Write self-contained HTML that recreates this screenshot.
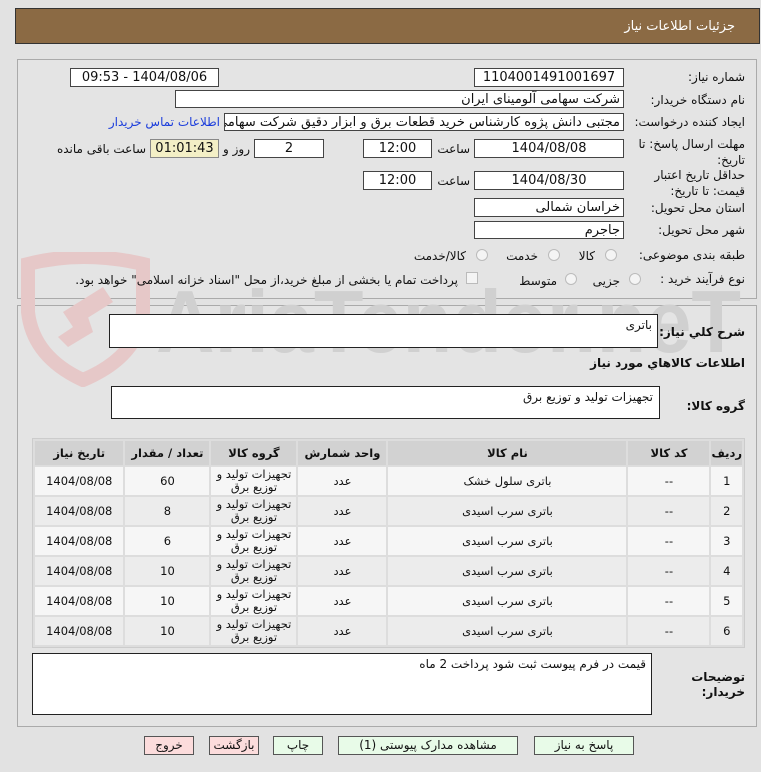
<!DOCTYPE html>
<html><head><meta charset="utf-8"><style>
*{box-sizing:border-box;margin:0;padding:0}
body{width:761px;height:772px;background:#e2e2e2;font-family:Tahoma,"DejaVu Sans","Noto Sans CJK SC",sans-serif;font-size:12px;color:#111;position:relative;overflow:hidden;direction:rtl}
.a{position:absolute}
.box{position:absolute;background:#fff;border:1px solid #444;text-align:center;line-height:17px;font-size:13px}
.lbl{position:absolute;white-space:nowrap;font-size:12px}
.ta{position:absolute;background:#fff;border:1px solid #222;padding:3px 5px;text-align:right;font-size:12px}
.rad{position:absolute;width:12px;height:12px;border-radius:50%;border:1px solid #bbb;background:#f4f4f4}
table{border-collapse:separate;border-spacing:2px;position:absolute;left:32px;top:438px;width:713px;background:#ddd;border:1px solid #ccc}
td,th{text-align:center;font-size:11.5px;height:28px;line-height:13px}
th{background:#d2d2d2;font-weight:bold;height:24px}
tr.o td{background:#f6f6f6}tr.e td{background:#ececec}
.btn{position:absolute;top:736px;height:19px;border:1px solid #555;font-size:12px;text-align:center;line-height:17px}
</style></head><body>
<div class="a" style="left:15px;top:8px;width:745px;height:36px;background:#8b6a44;border:1px solid #333"></div>
<div class="lbl" style="right:26px;top:19px;color:#fff;font-size:13px">جزئیات اطلاعات نیاز</div>

<div class="a" style="left:17px;top:59px;width:740px;height:240px;border:1px solid #aaa;background:#e4e4e4"></div>
<div class="a" style="left:17px;top:305px;width:740px;height:422px;border:1px solid #aaa;background:#e4e4e4"></div>

<!-- watermark -->
<svg class="a" style="left:18px;top:252px" width="740" height="135">
<path d="M10 12 Q65 -2 125 12 L125 60 Q120 105 65 128 Q15 105 10 60 Z" fill="none" stroke="#e6c8c8" stroke-width="14"/>
<path d="M45 60 L85 35 L95 50 L55 75 Z M40 85 L70 65 L75 80 L50 95Z" fill="#e6c8c8"/>
<text x="138" y="100" font-family="Liberation Sans,sans-serif" font-size="88" font-weight="bold" fill="#d0d0d0" textLength="585" lengthAdjust="spacingAndGlyphs" direction="ltr">AriaTender.neT</text>
</svg>

<div class="lbl" style="right:16px;top:70px">شماره نیاز:</div>
<div class="box" style="left:474px;top:68px;width:150px;height:19px">1104001491001697</div>
<div class="lbl" style="right:542px;top:70px">تاریخ و ساعت اعلان عمومی:</div>
<div class="box" style="left:70px;top:68px;width:149px;height:19px">1404/08/06 - 09:53</div>

<div class="lbl" style="right:16px;top:93px">نام دستگاه خریدار:</div>
<div class="box" style="left:175px;top:90px;width:449px;height:18px;text-align:right;padding-right:3px">شرکت سهامی آلومینای ایران</div>

<div class="lbl" style="right:16px;top:115px">ایجاد کننده درخواست:</div>
<div class="box" style="left:224px;top:113px;width:400px;height:18px;text-align:right;padding-right:3px;overflow:hidden;white-space:nowrap">مجتبی دانش پژوه کارشناس خرید قطعات برق و ابزار دقیق شرکت سهامی آلومینای ایران</div>
<div class="lbl" style="right:541px;top:115px;color:#1a3cdc">اطلاعات تماس خریدار</div>

<div class="lbl" style="right:16px;top:136px;line-height:16px;text-align:right">مهلت ارسال پاسخ: تا<br>تاریخ:</div>
<div class="box" style="left:474px;top:139px;width:150px;height:19px">1404/08/08</div>
<div class="lbl" style="right:291px;top:142px">ساعت</div>
<div class="box" style="left:363px;top:139px;width:69px;height:19px">12:00</div>
<div class="box" style="left:254px;top:139px;width:70px;height:19px">2</div>
<div class="lbl" style="right:511px;top:142px">روز و</div>
<div class="box" style="left:150px;top:139px;width:69px;height:19px;background:#f3efc6;border-color:#888">01:01:43</div>
<div class="lbl" style="right:615px;top:142px">ساعت باقی مانده</div>

<div class="lbl" style="right:16px;top:167px;line-height:16px;text-align:right">حداقل تاریخ اعتبار<br>قیمت: تا تاریخ:</div>
<div class="box" style="left:474px;top:171px;width:150px;height:19px">1404/08/30</div>
<div class="lbl" style="right:291px;top:174px">ساعت</div>
<div class="box" style="left:363px;top:171px;width:69px;height:19px">12:00</div>

<div class="lbl" style="right:16px;top:201px">استان محل تحویل:</div>
<div class="box" style="left:474px;top:198px;width:150px;height:19px;text-align:right;padding-right:3px">خراسان شمالی</div>
<div class="lbl" style="right:16px;top:223px">شهر محل تحویل:</div>
<div class="box" style="left:474px;top:221px;width:150px;height:18px;text-align:right;padding-right:3px">جاجرم</div>

<div class="lbl" style="right:16px;top:248px">طبقه بندی موضوعی:</div>
<div class="rad" style="left:605px;top:249px"></div><div class="lbl" style="right:166px;top:249px">کالا</div>
<div class="rad" style="left:548px;top:249px"></div><div class="lbl" style="right:223px;top:249px">خدمت</div>
<div class="rad" style="left:476px;top:249px"></div><div class="lbl" style="right:295px;top:249px">کالا/خدمت</div>

<div class="lbl" style="right:16px;top:272px">نوع فرآیند خرید :</div>
<div class="rad" style="left:629px;top:273px"></div><div class="lbl" style="right:141px;top:274px">جزیی</div>
<div class="rad" style="left:565px;top:273px"></div><div class="lbl" style="right:204px;top:274px">متوسط</div>
<div class="a" style="left:466px;top:272px;width:12px;height:12px;border:1px solid #bbb;background:#f4f4f4"></div>
<div class="lbl" style="right:303px;top:273px">پرداخت تمام یا بخشی از مبلغ خرید،از محل "اسناد خزانه اسلامی" خواهد بود.</div>

<div class="lbl" style="right:16px;top:325px;font-weight:bold">شرح کلي نياز:</div>
<div class="ta" style="left:109px;top:314px;width:549px;height:34px">باتری</div>
<div class="lbl" style="right:16px;top:356px;font-weight:bold">اطلاعات کالاهاي مورد نياز</div>
<div class="lbl" style="right:16px;top:399px;font-weight:bold">گروه کالا:</div>
<div class="ta" style="left:111px;top:386px;width:549px;height:33px;padding-right:6px">تجهیزات تولید و توزیع برق</div>

<table>
<tr><th style="width:27px">ردیف</th><th style="width:81px">کد کالا</th><th style="width:238px">نام کالا</th><th style="width:88px">واحد شمارش</th><th style="width:85px">گروه کالا</th><th style="width:84px">تعداد / مقدار</th><th>تاریخ نیاز</th></tr>
<tr class="o"><td>1</td><td>--</td><td>باتری سلول خشک</td><td>عدد</td><td>تجهیزات تولید و<br>توزیع برق</td><td>60</td><td>1404/08/08</td></tr>
<tr class="e"><td>2</td><td>--</td><td>باتری سرب اسیدی</td><td>عدد</td><td>تجهیزات تولید و<br>توزیع برق</td><td>8</td><td>1404/08/08</td></tr>
<tr class="o"><td>3</td><td>--</td><td>باتری سرب اسیدی</td><td>عدد</td><td>تجهیزات تولید و<br>توزیع برق</td><td>6</td><td>1404/08/08</td></tr>
<tr class="e"><td>4</td><td>--</td><td>باتری سرب اسیدی</td><td>عدد</td><td>تجهیزات تولید و<br>توزیع برق</td><td>10</td><td>1404/08/08</td></tr>
<tr class="o"><td>5</td><td>--</td><td>باتری سرب اسیدی</td><td>عدد</td><td>تجهیزات تولید و<br>توزیع برق</td><td>10</td><td>1404/08/08</td></tr>
<tr class="e"><td>6</td><td>--</td><td>باتری سرب اسیدی</td><td>عدد</td><td>تجهیزات تولید و<br>توزیع برق</td><td>10</td><td>1404/08/08</td></tr>
</table>

<div class="lbl" style="right:16px;top:670px;font-weight:bold;line-height:15px;text-align:right">توضیحات<br>خریدار:</div>
<div class="ta" style="left:32px;top:653px;width:620px;height:62px">قیمت در فرم پیوست ثبت شود پرداخت 2 ماه</div>

<div class="btn" style="left:534px;width:100px;background:#e8fbe8">پاسخ به نیاز</div>
<div class="btn" style="left:338px;width:180px;background:#e8fbe8">مشاهده مدارک پیوستی (1)</div>
<div class="btn" style="left:273px;width:50px;background:#e8fbe8">چاپ</div>
<div class="btn" style="left:209px;width:50px;background:#fcdcdc">بازگشت</div>
<div class="btn" style="left:144px;width:50px;background:#fcdcdc">خروج</div>
</body></html>
